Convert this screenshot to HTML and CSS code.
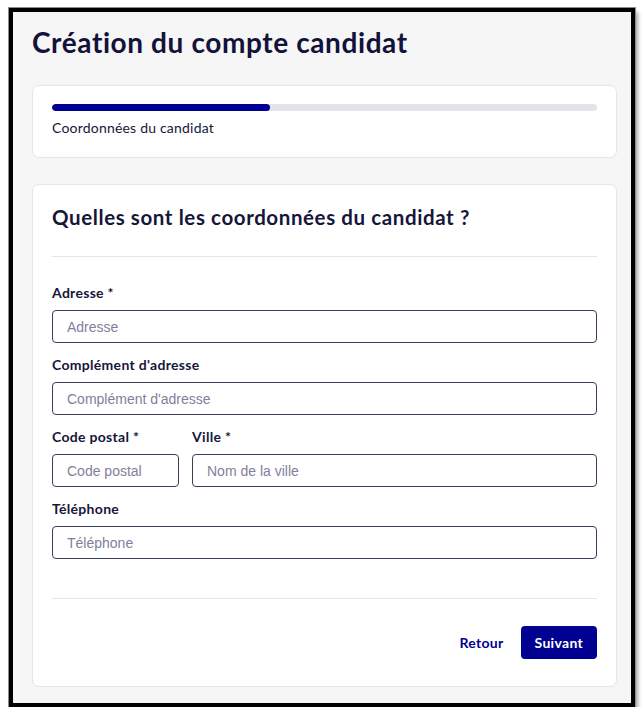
FILE: index.html
```html
<!DOCTYPE html>
<html lang="fr">
    <head>
        <meta charset="UTF-8">
        <title>Création du compte candidat</title>
        <link rel="stylesheet" href="styles.css">
    </head>
    <body>
        <div class="frame">
            <h1 class="page__title">Création du compte candidat</h1>

            <div class="card card--steps">
                <div class="progress">
                    <div class="progress__fill" style="width: 40%"></div>
                </div>
                <p class="progress__label">Coordonnées du candidat</p>
            </div>

            <form class="card card--form">
                <h2 class="form__title">Quelles sont les coordonnées du candidat ?</h2>
                <hr class="form__sep">

                <div class="field">
                    <label class="field__label" for="adresse">Adresse *</label>
                    <input class="field__input" id="adresse" type="text" placeholder="Adresse">
                </div>
                <div class="field">
                    <label class="field__label" for="complement">Complément d'adresse</label>
                    <input class="field__input" id="complement" type="text" placeholder="Complément d'adresse">
                </div>
                <div class="field__row">
                    <div class="field field--cp">
                        <label class="field__label" for="cp">Code postal *</label>
                        <input class="field__input" id="cp" type="text" placeholder="Code postal">
                    </div>
                    <div class="field field--ville">
                        <label class="field__label" for="ville">Ville *</label>
                        <input class="field__input" id="ville" type="text" placeholder="Nom de la ville">
                    </div>
                </div>
                <div class="field">
                    <label class="field__label" for="tel">Téléphone</label>
                    <input class="field__input" id="tel" type="tel" placeholder="Téléphone">
                </div>

                <hr class="form__sep form__sep--bottom">

                <div class="form__actions">
                    <button class="btn btn--link" type="button">Retour</button>
                    <button class="btn btn--primary" type="submit">Suivant</button>
                </div>
            </form>
        </div>
    </body>
</html>
```

FILE: styles.css
```css
html, body{
    margin: 0;
    background: #fff;
}

body{
    font-family: Lato, "Noto Sans", sans-serif;
    color: #16163a;
}

.frame{
    box-sizing: border-box;
    width: 626px;
    height: 699px;
    margin: 8px 0 0 9px;
    padding: 0 14px 0 19px;
    border: 4px solid #000;
    background: #f6f6f6;
    box-shadow: 0 0 0 1px #8c8c8c, 3px 4px 4px rgba(0, 0, 0, 0.35);
    overflow: hidden;
}

.page__title{
    margin: 0;
    padding-top: 12px;
    font-size: 28px;
    line-height: 36px;
    font-weight: 700;
    letter-spacing: 0.6px;
    color: #12123a;
}

.card{
    background: #fff;
    border: 1px solid #e6e6e6;
    border-radius: 7px;
    padding: 0 19px;
}

.card--steps{
    margin-top: 25px;
    height: 73px;
    padding-top: 18px;
    box-sizing: border-box;
}

.progress{
    height: 7px;
    border-radius: 4px;
    background: #e3e3ea;
    overflow: hidden;
}

.progress__fill{
    height: 100%;
    border-radius: 4px;
    background: #000091;
}

.progress__label{
    margin: 8px 0 0;
    font-size: 14px;
    line-height: 18px;
    letter-spacing: 0.2px;
    color: #16163a;
}

.card--form{
    display: block;
    margin-top: 26px;
    padding-top: 18px;
    padding-bottom: 27px;
}

.form__title{
    margin: 0;
    font-size: 20.5px;
    line-height: 28px;
    font-weight: 700;
    letter-spacing: 0.6px;
}

.form__sep{
    margin: 25px 0 27px;
    border: 0;
    border-top: 1px solid #e5e5e5;
}

.form__sep--bottom{
    margin: 39px 0 27px;
}

.field{
    display: flex;
    flex-direction: column;
    gap: 8px;
    margin-bottom: 13px;
}

.field__row{
    display: flex;
    gap: 13px;
}

.field--cp{
    width: 127px;
}

.field--ville{
    flex: 1;
}

.field__label{
    font-size: 14px;
    line-height: 18px;
    font-weight: 700;
    letter-spacing: 0.3px;
}

.field__input{
    box-sizing: border-box;
    width: 100%;
    height: 33px;
    margin: 0;
    padding: 0 14px;
    border: 1px solid #3b3b5c;
    border-radius: 4px;
    font-family: "Liberation Sans", Arial, sans-serif;
    font-size: 14px;
    color: #16163a;
    background: #fff;
}

.field__input::placeholder{
    color: #7f7f9c;
}

.field:last-of-type{
    margin-bottom: 0;
}

.form__actions{
    display: flex;
    justify-content: flex-end;
    align-items: center;
    gap: 17px;
}

.btn{
    font-family: Lato, "Noto Sans", sans-serif;
    font-size: 14px;
    font-weight: 700;
    letter-spacing: 0.3px;
    height: 33px;
    border: 0;
    border-radius: 4px;
    cursor: pointer;
}

.btn--link{
    background: none;
    color: #000091;
    padding: 0;
}

.btn--primary{
    background: #000091;
    color: #fff;
    padding: 0 14px;
}
```
